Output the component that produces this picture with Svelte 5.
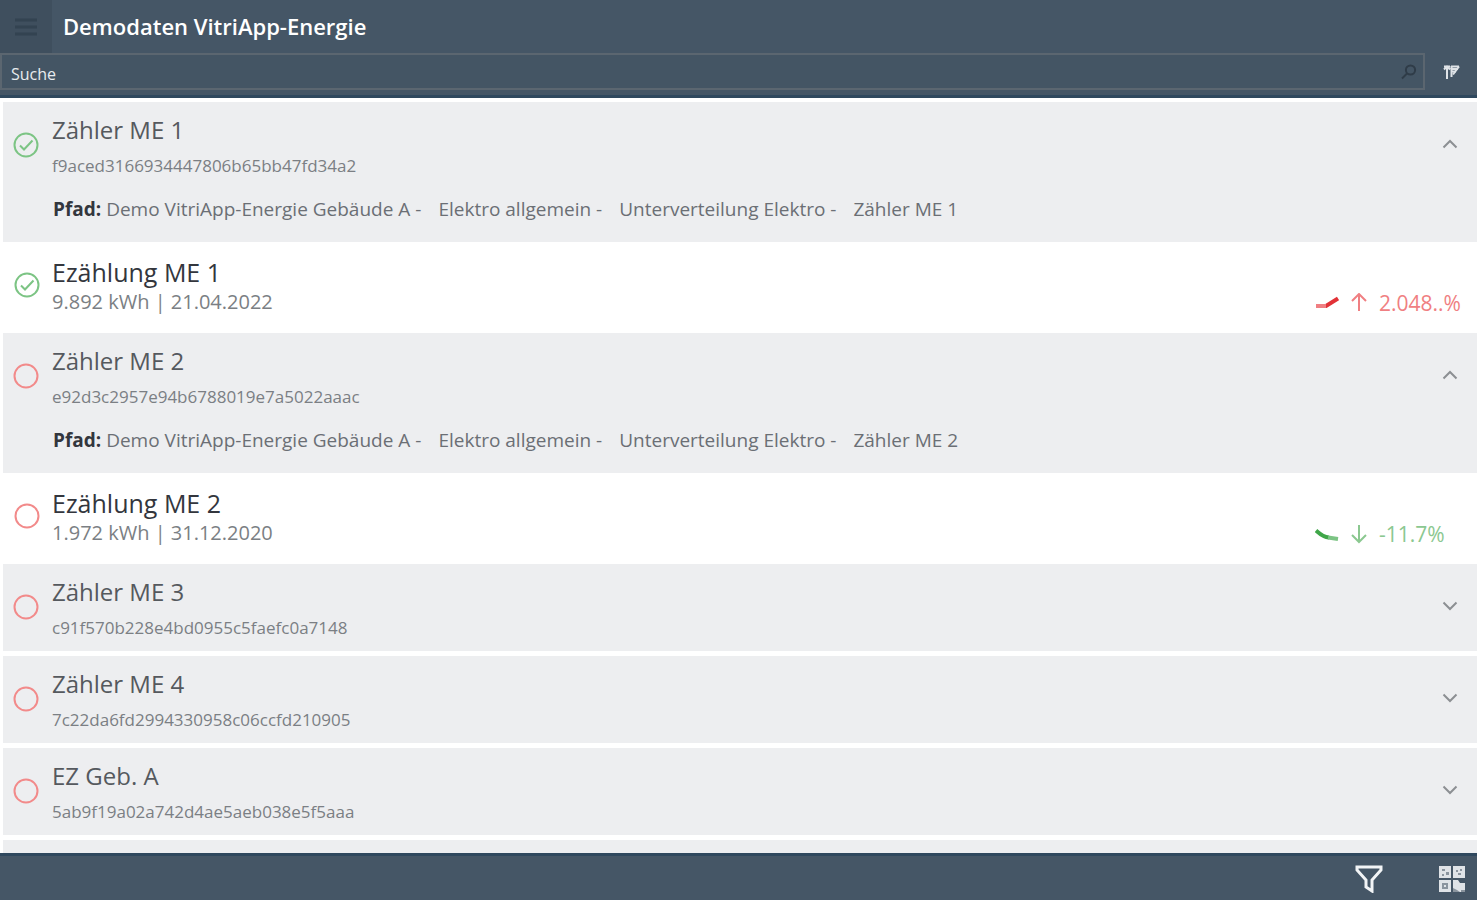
<script>
	let search = $state('');

	let meters = $state([
		{
			name: 'Zähler ME 1',
			id: 'f9aced3166934447806b65bb47fd34a2',
			done: true,
			open: true,
			path: ['Demo VitriApp-Energie Gebäude A', 'Elektro allgemein', 'Unterverteilung Elektro', 'Zähler ME 1'],
			reading: { name: 'Ezählung ME 1', value: '9.892 kWh | 21.04.2022', trend: 'up', change: '2.048..%' }
		},
		{
			name: 'Zähler ME 2',
			id: 'e92d3c2957e94b6788019e7a5022aaac',
			done: false,
			open: true,
			path: ['Demo VitriApp-Energie Gebäude A', 'Elektro allgemein', 'Unterverteilung Elektro', 'Zähler ME 2'],
			reading: { name: 'Ezählung ME 2', value: '1.972 kWh | 31.12.2020', trend: 'down', change: '-11.7%' }
		},
		{ name: 'Zähler ME 3', id: 'c91f570b228e4bd0955c5faefc0a7148', done: false, open: false },
		{ name: 'Zähler ME 4', id: '7c22da6fd2994330958c06ccfd210905', done: false, open: false },
		{ name: 'EZ Geb. A', id: '5ab9f19a02a742d4ae5aeb038e5f5aaa', done: false, open: false }
	]);
</script>

{#snippet status(done)}
	<svg class="status" class:done viewBox="0 0 26 26">
		<circle cx="13" cy="13" r="11.5" />
		{#if done}
			<path d="M7 13.5l4 4 8.5-9" />
		{/if}
	</svg>
{/snippet}

<div class="page">
	<header>
		<div class="title-bar">
			<button class="menu-button" aria-label="Menu">
				<svg width="22" height="18" viewBox="0 0 22 18"><path d="M0 2h22M0 9h22M0 16h22" /></svg>
			</button>
			<h1>Demodaten VitriApp-Energie</h1>
		</div>
		<div class="search-bar">
			<div class="search-wrapper">
				<input type="text" placeholder="Suche" aria-label="Suche" bind:value={search} />
				<svg class="search-icon" width="16" height="16" viewBox="0 0 16 16">
					<circle cx="9.5" cy="6" r="4.6" />
					<path d="M6 9.5L1 14.5" />
				</svg>
			</div>
			<button class="sort-button" aria-label="Sort">
				<svg width="18" height="18" viewBox="0 0 18 18">
					<path d="M5 16V4M2 6.5l3-3 3 3M2 3.5h6M9.5 3v11" />
					<path d="M9 3.5h8M10 6h6M10 8.5h4" />
					<path d="M17 3.5l-6 8" />
				</svg>
			</button>
		</div>
	</header>

	<main>
		{#each meters as meter}
			<section>
				<div class="meter" class:open={meter.open && meter.path}>
					<div class="row">
						{@render status(meter.done)}
						<div class="text">
							<h2>{meter.name}</h2>
							<p class="id">{meter.id}</p>
						</div>
						<button class="toggle" aria-label="Details" onclick={() => (meter.open = !meter.open)}>
							<svg width="16" height="10" viewBox="0 0 16 10">
								<path d={meter.open ? 'M1.5 8.5L8 2l6.5 6.5' : 'M1.5 1.5L8 8l6.5-6.5'} />
							</svg>
						</button>
					</div>
					{#if meter.open && meter.path}
						<p class="path">
							<strong>Pfad:</strong>
							{#each meter.path as part, i}
								<span>{part}{i < meter.path.length - 1 ? ' -' : ''}</span>
							{/each}
						</p>
					{/if}
				</div>
				{#if meter.open && meter.reading}
					<div class="reading">
						{@render status(meter.done)}
						<div class="text">
							<h3>{meter.reading.name}</h3>
							<p class="value">{meter.reading.value}</p>
						</div>
						<div class="trend {meter.reading.trend}">
							{#if meter.reading.trend == 'up'}
								<svg width="24" height="16" viewBox="0 0 24 16">
									<path class="spark" d="M1 11h10L23 3.5" />
									<path class="spark faded" d="M1 11h10" />
								</svg>
								<svg width="18" height="20" viewBox="0 0 18 20"><path d="M9 18V1M2 8l7-7 7 7" /></svg>
							{:else}
								<svg width="24" height="16" viewBox="0 0 24 16">
									<path class="spark" d="M1 4.5C5 8 8 11 14 11.5" />
									<path class="spark faded" d="M13 11.5l10 1.5" />
								</svg>
								<svg width="18" height="20" viewBox="0 0 18 20"><path d="M9 1v17M2 11l7 7 7-7" /></svg>
							{/if}
							<span>{meter.reading.change}</span>
						</div>
					</div>
				{/if}
			</section>
		{/each}
		<section><div class="meter"></div></section>
	</main>

	<footer>
		<button aria-label="Filter">
			<svg width="28" height="28" viewBox="0 0 28 28">
				<path d="M2 2h24v3l-9 10v11l-6-4v-7L2 5z" />
			</svg>
		</button>
		<button aria-label="QR-Code">
			<svg class="qr" width="28" height="28" viewBox="0 0 28 28">
				<rect x="1" y="1" width="12" height="12" />
				<rect x="15" y="1" width="12" height="12" />
				<rect x="1" y="15" width="12" height="12" />
				<path d="M15 15h5l2 3h5v9h-12z" />
				<path class="dark" d="M4 4h3v2H4zM8 7h3v3H8zM4 9h2v2H4zM18 5h2v2h-2zM22 4h2v2h-2zM20 8h3v2h-3zM4 18h6v6H4zM15 23l4 2 3 2h-7zM23 25h4v2h-4z" />
				<rect x="6" y="20" width="2" height="2" />
			</svg>
		</button>
	</footer>
</div>

<style>
	:global(body) {
		margin: 0;
		background: #fff;
	}

	.page {
		height: 100vh;
		display: flex;
		flex-direction: column;
		font-family: "Open Sans", sans-serif;
		color: #55595e;
	}

	h1, h2, h3, p {
		margin: 0;
		font-weight: 400;
	}

	button {
		background: none;
		border: none;
		padding: 0;
		cursor: pointer;
		display: flex;
		align-items: center;
		justify-content: center;
	}

	svg {
		fill: none;
		flex-shrink: 0;
	}

	/* Header */
	header {
		background: #455666;
		border-bottom: 3px solid #2f485e;
		box-sizing: border-box;
		height: 98px;
		flex-shrink: 0;
	}

	.title-bar {
		display: flex;
		align-items: center;
		height: 53px;
	}

	.menu-button {
		width: 52px;
		height: 53px;
		background: #3f4f5e;
		stroke: #334351;
		stroke-width: 3;
	}

	h1 {
		margin-left: 11px;
		padding-bottom: 2px;
		font-size: 22px;
		line-height: 30px;
		font-weight: 600;
		color: #fff;
	}

	.search-bar {
		display: flex;
		height: 37px;
	}

	.search-wrapper {
		flex: 1;
		display: flex;
		align-items: center;
		box-sizing: border-box;
		border: 2px solid #5b6670;
		padding: 0 6px 0 9px;
		background: #445564;
	}

	input {
		flex: 1;
		background: none;
		border: none;
		outline: none;
		padding: 4px 0 0;
		font-family: inherit;
		font-size: 16px;
		color: #fff;
	}

	input::placeholder {
		color: #e8ebee;
		opacity: 1;
	}

	.search-icon {
		stroke: #2f3c48;
		stroke-width: 2;
	}

	.sort-button {
		width: 52px;
		stroke: #dfe3e7;
		stroke-width: 2;
	}

	/* Meter list */
	main {
		flex: 1;
		min-height: 0;
		padding: 4px 0 0 3px;
		overflow-y: auto;
		scrollbar-width: none;
	}

	.meter {
		background: #edeef0;
		box-sizing: border-box;
		height: 87px;
		margin-bottom: 5px;
	}

	.meter.open {
		height: 140px;
		margin-bottom: 0;
	}

	.row {
		display: flex;
		align-items: center;
		box-sizing: border-box;
		height: 86px;
		padding: 0 18px 0 10px;
	}

	.text {
		flex: 1;
		margin-left: 13px;
	}

	.status {
		width: 26px;
		height: 26px;
		stroke: #f28a8a;
		stroke-width: 2;
	}

	.status.done {
		stroke: #7cc484;
	}

	h2, h3 {
		font-size: 24px;
		line-height: 32px;
	}

	h3 {
		font-size: 25px;
		color: #33363d;
	}

	.id {
		margin-top: 8px;
		font-size: 17px;
		line-height: 24px;
		color: #7b7f84;
	}

	.row .text {
		padding-top: 2px;
	}

	.toggle {
		width: 18px;
		height: 24px;
		padding-bottom: 2px;
		stroke: #8c8f93;
		stroke-width: 2;
	}

	.path {
		padding: 7px 0 0 50px;
		font-size: 19px;
		line-height: 28px;
		color: #6b6f75;
	}

	.path strong {
		font-weight: 700;
		color: #33363d;
	}

	.path span {
		margin-right: 17px;
	}

	.reading {
		display: flex;
		align-items: center;
		height: 86px;
		margin-bottom: 5px;
		padding: 0 12px 0 11px;
	}

	.reading .text {
		margin-left: 12px;
		padding-top: 2px;
	}

	.value {
		font-size: 20px;
		line-height: 28px;
		color: #7b7f84;
	}

	.trend {
		display: flex;
		align-items: center;
		align-self: flex-end;
		gap: 11px;
		width: 150px;
		margin-bottom: 11px;
		font-size: 21px;
		line-height: 28px;
		white-space: nowrap;
		stroke-width: 2;
	}

	.trend svg {
		stroke: currentColor;
	}

	.trend .spark {
		stroke-width: 4;
	}

	.up {
		color: #f07f82;
	}

	.up .spark {
		stroke: #e23237;
	}

	.trend.up .faded {
		stroke: #f07f82;
	}

	.down {
		color: #8bc890;
	}

	.down .spark {
		stroke: #3fa648;
	}

	.trend.down .faded {
		stroke: #7cc484;
	}

	/* Footer */
	footer {
		display: flex;
		align-items: center;
		justify-content: flex-end;
		gap: 55px;
		box-sizing: border-box;
		height: 47px;
		flex-shrink: 0;
		padding: 2px 11px 0 0;
		background: #455666;
		border-top: 3px solid #2f485e;
	}

	footer button {
		stroke: #f2f4f6;
		stroke-width: 3;
	}

	footer .qr {
		fill: #dfe3e7;
		stroke: none;
	}

	.qr .dark {
		fill: #8a949e;
	}
</style>
